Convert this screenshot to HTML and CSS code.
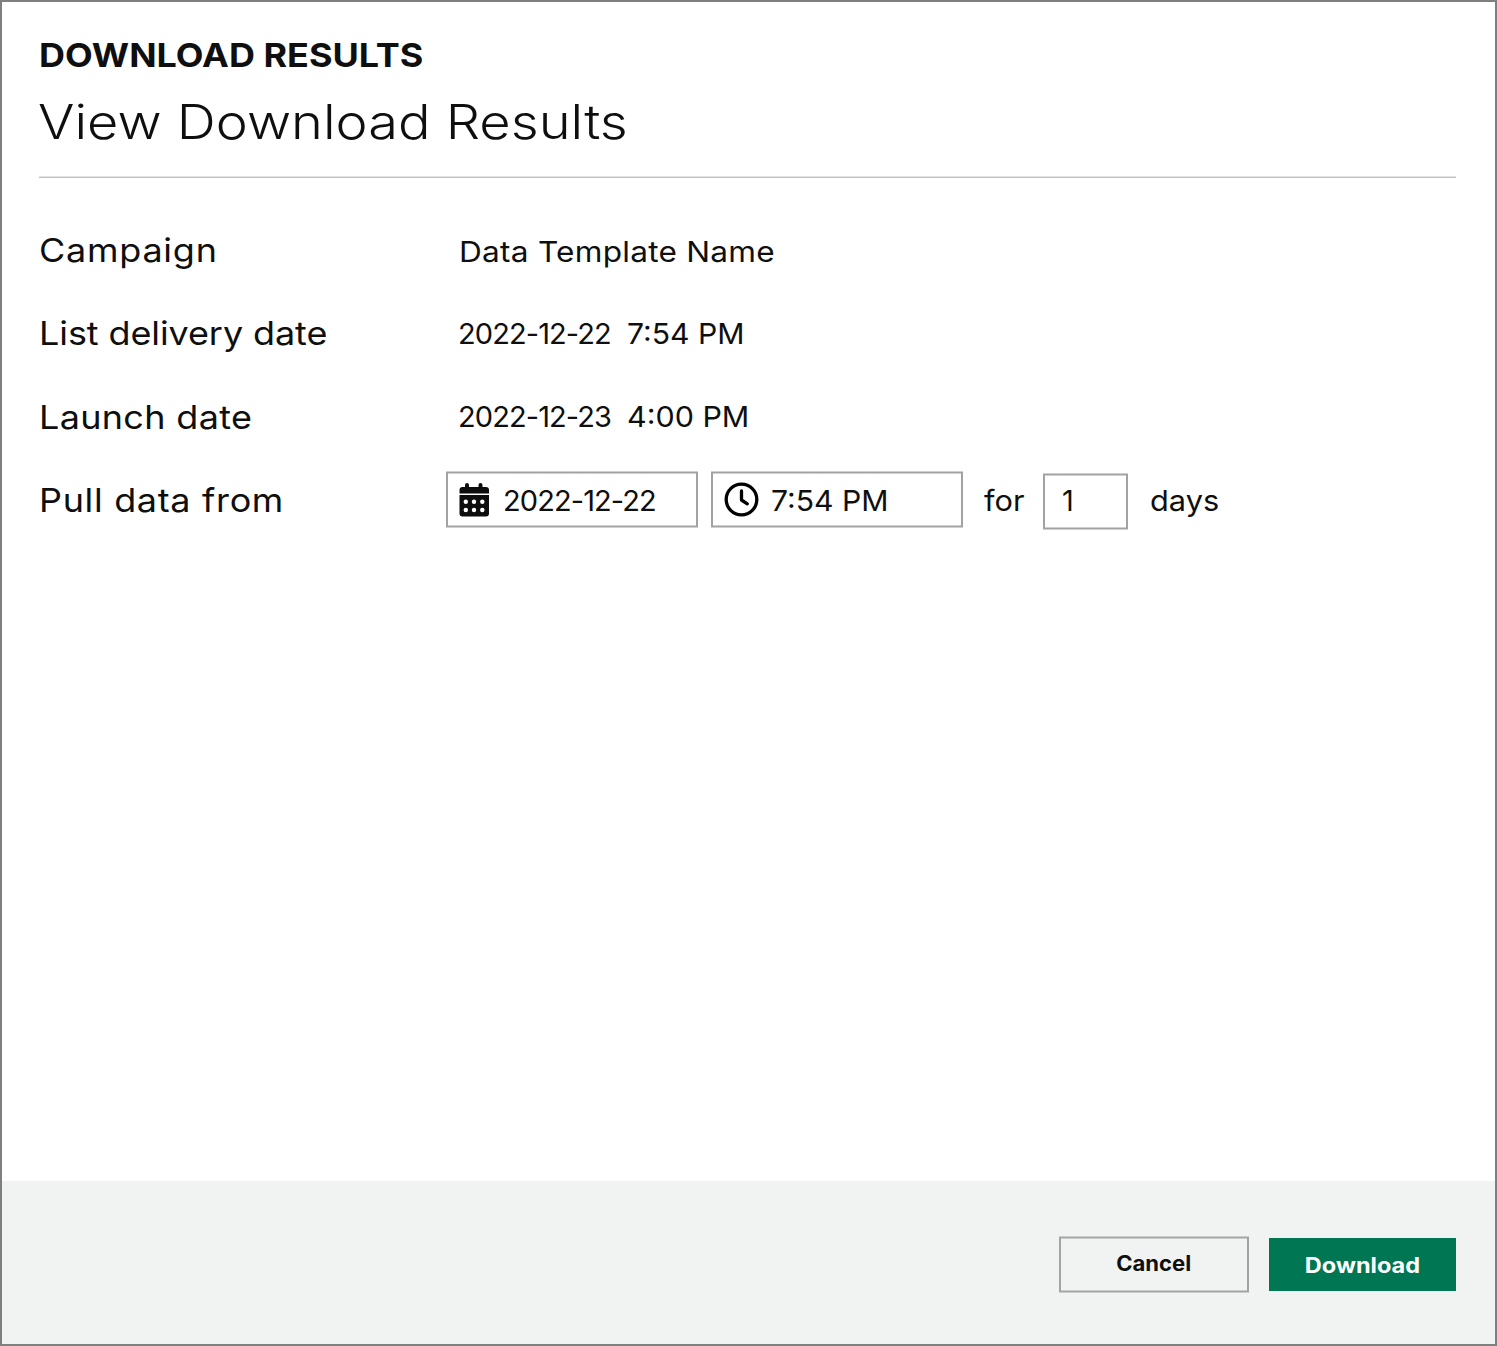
FILE: index.html
```html
<!DOCTYPE html>
<html lang="en">
<head>
<meta charset="utf-8">
<title>Download Results</title>
<link rel="stylesheet" href="styles.css">
</head>
<body>
<main class="dialog">
  <header class="header">
    <h2 class="eyebrow">DOWNLOAD RESULTS</h2>
    <h1 class="title">View Download Results</h1>
  </header>
  <section class="details">
    <div class="row">
      <div class="label"><span class="wide label-campaign">Campaign</span></div>
      <div class="value value-name"><span class="wide name">Data Template Name</span></div>
    </div>
    <div class="row">
      <div class="label"><span class="wide label-delivery">List delivery date</span></div>
      <div class="value value-date"><span class="date">2022-12-22</span><span class="wide time">7:54 PM</span></div>
    </div>
    <div class="row row-launch">
      <div class="label"><span class="wide label-launch">Launch date</span></div>
      <div class="value value-date"><span class="date">2022-12-23</span><span class="wide time time-launch">4:00 PM</span></div>
    </div>
    <div class="row row-pull">
      <div class="label"><span class="wide label-pull">Pull data from</span></div>
      <div class="controls">
        <div class="field">
          <svg class="icon icon-calendar" width="30" height="34" viewBox="0 0 30 34">
            <path fill="#0d0d0d" d="M0.500 10.500V7q0-3 3-3H6V2q0-1.900 2-1.900T10 2v2h9.500V2q0-1.900 2-1.900T23.500 2v2h3.500q3 0 3 3v3.500zM0.500 12H30v18.500q0 3-3 3H3.500q-3 0-3-3z"/>
            <g fill="#fff"><circle cx="6.800" cy="18.700" r="2.200"/><circle cx="15" cy="18.700" r="2.200"/><circle cx="23.300" cy="18.700" r="2.200"/><circle cx="6.800" cy="27" r="2.200"/><circle cx="15" cy="27" r="2.200"/><circle cx="23.300" cy="27" r="2.200"/></g>
          </svg>
          <span class="date">2022-12-22</span>
        </div>
        <div class="field field-time">
          <svg class="icon icon-clock" width="35" height="35" viewBox="0 0 35 35" fill="none" stroke="#000" stroke-width="3.300" stroke-linecap="round" stroke-linejoin="round">
            <circle cx="17.500" cy="17.500" r="15.300"/>
            <path d="M17.500 9v9l5.800 3.800"/>
          </svg>
          <span class="wide time">7:54 PM</span>
        </div>
        <span class="word word-for">for</span>
        <div class="field field-days"><span>1</span></div>
        <span class="word word-days">days</span>
      </div>
    </div>
  </section>
  <footer class="footer">
    <button class="button cancel" type="button"><span class="cancel-text">Cancel</span></button>
    <button class="button download" type="button"><span class="download-text">Download</span></button>
  </footer>
</main>
</body>
</html>
```
FILE: styles.css
```css
* {
  box-sizing: border-box;
}

body {
  margin: 0;
  background: #fff;
  color: #0f0f0f;
  font-family: Inter, "Liberation Sans", sans-serif;
}

.dialog {
  display: flex;
  flex-direction: column;
  width: 1497px;
  height: 1346px;
  border: 2px solid #7f7f7f;
}

.header {
  height: 176px;
  margin: 0 39px 0 37px;
  padding-top: 33px;
  border-bottom: 1px solid #c2c2c2;
  box-shadow: inset 0 -1px #e2e2e2;
}

.eyebrow {
  width: max-content;
  margin: 0;
  font-size: 33px;
  font-weight: 700;
  line-height: 40px;
  transform: scaleX(1.09);
  transform-origin: left;
}

.title {
  width: max-content;
  margin: 18px 0 0 -1px;
  font-size: 48px;
  font-weight: 300;
  line-height: 58px;
  transform: scaleX(1.128);
  transform-origin: left;
}

.details {
  flex: 1;
  padding: 52px 39px 0 37px;
}

.row {
  display: flex;
  align-items: flex-start;
  height: 83px;
}

.row-launch {
  margin-top: 1px;
}

.wide {
  display: inline-block;
  transform: scaleX(1.09);
  transform-origin: left;
}

.label {
  width: 407px;
  font-size: 33px;
  line-height: 40px;
  white-space: nowrap;
}

.label-campaign {
  letter-spacing: 0.7px;
}

.label-delivery {
  letter-spacing: -0.08px;
}

.label-launch {
  letter-spacing: 0.3px;
}

.label-pull {
  letter-spacing: 0.62px;
}

.value {
  display: flex;
  padding: 3px 0 0 12px;
  font-size: 29px;
  line-height: 36px;
}

.value-name {
  padding: 4px 0 0 13px;
}

.name {
  letter-spacing: 0.22px;
}

.row-launch .value-date {
  padding-top: 2px;
}

.date {
  width: 169px;
  letter-spacing: -0.9px;
}

.time {
  letter-spacing: 0;
  transform: scaleX(1.04);
}

.time-launch {
  transform: scaleX(1.05);
}

.controls {
  display: flex;
  align-items: flex-start;
  margin-top: -8px;
  font-size: 29px;
  line-height: 36px;
}

.field {
  display: flex;
  align-items: flex-start;
  width: 252px;
  height: 55px;
  padding: 10px 0 0 11px;
  border: solid #a2a2a2;
  border-width: 1px 2px;
  box-shadow: 0 -1px #d0d0d0, 0 1px #d0d0d0, inset 0 1px #d0d0d0, inset 0 -1px #d0d0d0;
}

.icon {
  flex: none;
}

.icon-calendar {
  margin-right: 14px;
}

.icon-clock {
  margin: -1px 12px 0 0;
}

.field-time {
  margin-left: 13px;
}

.word {
  margin-top: 11px;
  transform: scaleX(1.06);
  transform-origin: left;
}

.word-for {
  width: 59px;
  margin-left: 21px;
}

.field-days {
  width: 85px;
  margin-top: 2px;
  padding: 8px 0 0 17px;
}

.word-days {
  margin-left: 22px;
}

.footer {
  display: flex;
  align-items: flex-start;
  justify-content: flex-end;
  gap: 20px;
  height: 163px;
  padding: 56px 39px 0;
  background: #f1f3f2;
}

.button {
  margin: 0;
  border: 0;
  border-radius: 0;
  background: none;
  color: inherit;
  font: 700 21px/24px Inter, "Liberation Sans", sans-serif;
  text-align: center;
}

.cancel {
  width: 190px;
  height: 55px;
  padding: 0 0 1px;
  border: solid #a2a4a3;
  border-width: 1px 2px;
  box-shadow: 0 -1px #cbcdcc, 0 1px #cbcdcc, inset 0 1px #cbcdcc, inset 0 -1px #cbcdcc;
}

.cancel-text {
  display: inline-block;
  transform: scaleX(1.05);
}

.download {
  width: 187px;
  height: 53px;
  margin-top: 1px;
  padding: 3px 0 0;
  background: #007752;
  color: #fff;
}

.download-text {
  display: inline-block;
  transform: scaleX(1.12);
}
```
